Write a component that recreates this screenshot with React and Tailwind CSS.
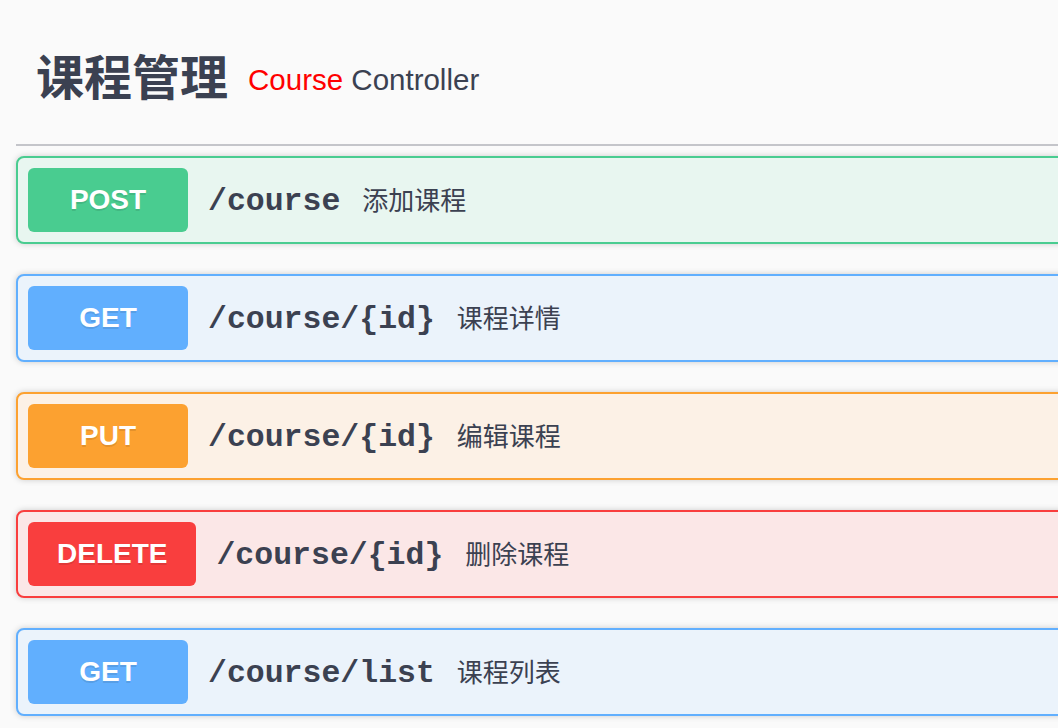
const ops = [
  {
    method: "POST",
    path: "/course",
    desc: "添加课程",
    box: "border-[#49cc90] bg-[#e8f6f0]",
    badge: "bg-[#49cc90]",
  },
  {
    method: "GET",
    path: "/course/{id}",
    desc: "课程详情",
    box: "border-[#61affe] bg-[#ebf3fb]",
    badge: "bg-[#61affe]",
  },
  {
    method: "PUT",
    path: "/course/{id}",
    desc: "编辑课程",
    box: "border-[#fca130] bg-[#fcf1e6]",
    badge: "bg-[#fca130]",
  },
  {
    method: "DELETE",
    path: "/course/{id}",
    desc: "删除课程",
    box: "border-[#f93e3e] bg-[#fbe7e7]",
    badge: "bg-[#f93e3e]",
  },
  {
    method: "GET",
    path: "/course/list",
    desc: "课程列表",
    box: "border-[#61affe] bg-[#ebf3fb]",
    badge: "bg-[#61affe]",
  },
];

const sans = "font-['Liberation_Sans','Noto_Sans_CJK_SC',sans-serif]";

export default function App() {
  return (
    <main className={`h-[728px] w-[1058px] overflow-hidden bg-[#fafafa] text-[#3b4151] ${sans}`}>
      <div className="ml-4 w-[1200px]">
        <div className="flex h-[146px] items-center border-b-2 border-[#c4c5ca] pl-5 pt-[14px]">
          <h4 className="text-[48px] font-bold leading-none">课程管理</h4>
          <small className="ml-5 mt-[1px] text-[29.5px] leading-none">
            <span className="text-[#ff0000]">Course</span> Controller
          </small>
        </div>

        <div className="mt-[10px] flex flex-col gap-[30px]">
          {ops.map((op, i) => (
            <div
              key={i}
              className={`flex h-[88px] items-center rounded-lg border-2 p-[10px] shadow-[0_0_6px_rgba(0,0,0,0.19)] ${op.box}`}
            >
              <span
                className={`flex h-16 min-w-[160px] items-center justify-center rounded-md px-[29px] text-[28px] font-bold text-white [text-shadow:0_2px_0_rgba(0,0,0,0.1)] ${op.badge}`}
              >
                {op.method}
              </span>
              <span className="pl-5 pr-[22px] pt-[3px] font-['Liberation_Mono',monospace] text-[31.5px] font-bold">
                {op.path}
              </span>
              <span className="pt-[3px] text-[26px]">{op.desc}</span>
            </div>
          ))}
        </div>
      </div>
    </main>
  );
}
